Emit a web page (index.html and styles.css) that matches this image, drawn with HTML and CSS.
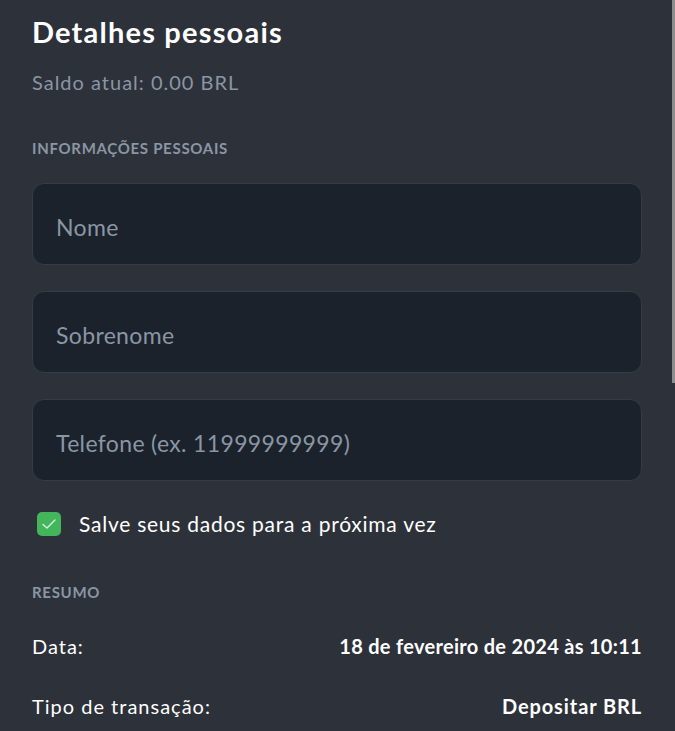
FILE: index.html
```html
<!DOCTYPE html>
<html lang="pt">
<head>
<meta charset="utf-8">
<title>Detalhes pessoais</title>
<link rel="stylesheet" href="styles.css">
</head>
<body>
<main class="page">
  <h1 class="title">Detalhes pessoais</h1>
  <p class="balance">Saldo atual: 0.00 BRL</p>

  <h2 class="section-label">INFORMAÇÕES PESSOAIS</h2>
  <form class="fields">
    <input class="field" type="text" placeholder="Nome">
    <input class="field" type="text" placeholder="Sobrenome">
    <input class="field" type="tel" placeholder="Telefone (ex. 11999999999)">
    <label class="check">
      <span class="box">
        <svg width="16" height="12" viewBox="0 0 16 12"><path d="M2 6.5 L6 10 L14 2" fill="none" stroke="#d9f2de" stroke-width="1.4" stroke-linecap="round" stroke-linejoin="round"/></svg>
      </span>
      <span class="check-text">Salve seus dados para a próxima vez</span>
    </label>
  </form>

  <h2 class="section-label summary-label">RESUMO</h2>
  <div class="row">
    <span class="row-key">Data:</span>
    <span class="row-val">18 de fevereiro de 2024 às 10:11</span>
  </div>
  <div class="row">
    <span class="row-key">Tipo de transação:</span>
    <span class="row-val wide">Depositar BRL</span>
  </div>
</main>
<div class="scroll-thumb"></div>
</body>
</html>
```

FILE: styles.css
```css
html, body {
  margin: 0;
  padding: 0;
  background: #2d313a;
  height: 100%;
  overflow: hidden;
}
body {
  font-family: Lato, "Open Sans", sans-serif;
  color: #ffffff;
}
.page {
  width: 610px;
  padding: 12px 0 0 32px;
}
.title {
  margin: 0;
  font-size: 29px;
  font-weight: 700;
  line-height: 40px;
  letter-spacing: 1.2px;
  color: #ffffff;
}
.balance {
  margin: 17px 0 0;
  font-size: 20px;
  line-height: 26px;
  letter-spacing: 1px;
  color: #8a96a4;
}
.section-label {
  margin: 43px 0 0;
  font-size: 15px;
  font-weight: 700;
  line-height: 20px;
  letter-spacing: 0.7px;
  color: #8a96a4;
}
.fields {
  margin-top: 25px;
  display: flex;
  flex-direction: column;
  gap: 26px;
}
.field {
  box-sizing: border-box;
  width: 610px;
  height: 82px;
  margin: 0;
  padding: 6px 23px 0;
  background: #1b222b;
  border: 1px solid #363c47;
  border-radius: 12px;
  font-family: inherit;
  font-size: 23px;
  letter-spacing: 0.35px;
  color: #ffffff;
  outline: none;
}
.field::placeholder {
  color: #8a96a4;
}
.check {
  display: flex;
  align-items: center;
  gap: 18px;
  padding-left: 5px;
  margin-top: 4px;
}
.box {
  width: 24px;
  height: 24px;
  border-radius: 5px;
  background: #43b55a;
  display: flex;
  align-items: center;
  justify-content: center;
}
.check-text {
  font-size: 21px;
  line-height: 26px;
  letter-spacing: 0.75px;
  color: #ffffff;
}
.summary-label {
  margin-top: 45px;
}
.row {
  display: flex;
  justify-content: space-between;
  align-items: center;
  height: 60px;
  font-size: 20px;
}
.row:first-of-type {
  margin-top: 14px;
}
.row-key {
  letter-spacing: 1px;
}
.row-val {
  font-weight: 700;
  letter-spacing: 0.3px;
}
.row-val.wide {
  letter-spacing: 0.9px;
}
.scroll-thumb {
  position: fixed;
  top: 0;
  right: 0;
  width: 3px;
  height: 383px;
  background: #8d8d8d;
}
```
